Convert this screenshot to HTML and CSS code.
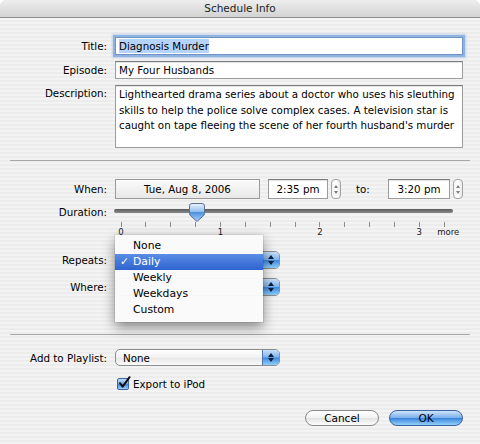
FILE: index.html
```html
<!DOCTYPE html>
<html lang="en">
<head>
<meta charset="UTF-8" />
<title>Schedule Info</title>
<link rel="stylesheet" href="styles.css">
</head>
<body>

<div class="window">
  <div class="titlebar">Schedule Info</div>

  <div class="content">
    <div class="row r-title">
      <label class="label">Title:</label>
      <div class="field focused"><span class="selected">Diagnosis Murder</span></div>
    </div>
    <div class="row r-episode">
      <label class="label">Episode:</label>
      <div class="field">My Four Husbands</div>
    </div>
    <div class="row r-desc">
      <label class="label">Description:</label>
      <div class="field area">Lighthearted drama series about a doctor who uses his sleuthing<br>skills to help the police solve complex cases. A television star is<br>caught on tape fleeing the scene of her fourth husband's murder</div>
    </div>

    <hr class="sep">

    <div class="schedule">
      <div class="row r-when">
        <label class="label">When:</label>
        <div class="datebox">Tue, Aug 8, 2006</div>
        <div class="field time">2:35 pm</div>
        <div class="stepper"><span class="up"></span><span class="down"></span></div>
        <span class="to">to:</span>
        <div class="field time wide">3:20 pm</div>
        <div class="stepper"><span class="up"></span><span class="down"></span></div>
      </div>

      <div class="row r-duration">
        <label class="label">Duration:</label>
        <div class="slider">
          <div class="track"></div>
          <svg class="knob" width="16" height="19" viewBox="0 0 16 19">
            <defs>
              <linearGradient id="knobfill" x1="0" y1="0" x2="0" y2="1">
                <stop offset="0" stop-color="#eef5fd"/>
                <stop offset="0.45" stop-color="#93bfee"/>
                <stop offset="0.5" stop-color="#4f90de"/>
                <stop offset="1" stop-color="#a9d4fb"/>
              </linearGradient>
            </defs>
            <path d="M3 .5 H13 Q15.5 .5 15.5 3 V10.5 Q15.5 12 14 13.2 L8 18.5 L2 13.2 Q.5 12 .5 10.5 V3 Q.5 .5 3 .5 Z" fill="url(#knobfill)" stroke="#5a7296"/>
          </svg>
          <div class="scale">
            <div class="tick"><i></i><span>0</span></div>
            <div class="tick"><i></i></div>
            <div class="tick"><i></i></div>
            <div class="tick"><i></i></div>
            <div class="tick"><i></i><span>1</span></div>
            <div class="tick"><i></i></div>
            <div class="tick"><i></i></div>
            <div class="tick"><i></i></div>
            <div class="tick"><i></i><span>2</span></div>
            <div class="tick"><i></i></div>
            <div class="tick"><i></i></div>
            <div class="tick"><i></i></div>
            <div class="tick"><i></i><span>3</span></div>
            <div class="tick last"><i></i><span>more</span></div>
          </div>
        </div>
      </div>

      <div class="row r-repeats">
        <label class="label">Repeats:</label>
        <div class="popup"><span class="value"></span><span class="arrows"></span></div>
      </div>
      <div class="row r-where">
        <label class="label">Where:</label>
        <div class="popup"><span class="value"></span><span class="arrows"></span></div>
      </div>

      <!-- open Repeats menu -->
      <ul class="menu">
        <li>None</li>
        <li class="current"><span class="check">&#10003;</span>Daily</li>
        <li>Weekly</li>
        <li>Weekdays</li>
        <li>Custom</li>
      </ul>
    </div>

    <hr class="sep sep2">

    <div class="row r-playlist">
      <label class="label">Add to Playlist:</label>
      <div class="popup"><span class="value">None</span><span class="arrows"></span></div>
    </div>
    <div class="row r-ipod">
      <span class="label"></span>
      <span class="checkbox">
        <svg width="14" height="14" viewBox="0 0 14 14">
          <path d="M3 7.2 L5.6 10.6 L12.6 1.2" fill="none" stroke="#111" stroke-width="2" stroke-linecap="round" stroke-linejoin="round"/>
        </svg>
      </span>
      <span class="check-label">Export to iPod</span>
    </div>

    <div class="buttons">
      <button class="btn">Cancel</button>
      <button class="btn default">OK</button>
    </div>
  </div>
</div>

</body>
</html>
```

FILE: styles.css
```css
* {
  box-sizing: border-box;
}
body {
  margin: 0;
  background: #fff;
  font-family: "DejaVu Sans", sans-serif;
  font-size: 10.3px;
  color: #000;
}
.window {
  width: 480px;
  height: 444px;
  border-radius: 6px 6px 0 0;
  overflow: hidden;
  background: repeating-linear-gradient(to bottom, #ececec 0, #ececec 2px, #f3f3f3 2px, #f3f3f3 4px);
}
.titlebar {
  height: 18px;
  line-height: 17px;
  text-align: center;
  font-size: 10.5px;
  color: #222;
  background: linear-gradient(#eeeeee, #d3d3d3);
  border-bottom: 1px solid #8e8e8e;
}
.content {
  position: relative;
}

/* form rows */
.row {
  display: flex;
  align-items: center;
}
.label {
  flex: none;
  width: 107px;
  margin-right: 8px;
  text-align: right;
}
.r-title {
  margin-top: 19px;
  height: 18px;
}
.r-episode {
  margin-top: 6px;
  height: 18px;
}
.r-desc {
  margin-top: 6px;
  height: 63px;
  align-items: flex-start;
}
.r-desc .label {
  padding-top: 2px;
}

.field {
  height: 100%;
  width: 348px;
  padding: 0 3px;
  line-height: 16px;
  background: #fff;
  border: 1px solid #9c9c9c;
  border-top-color: #7c7c7c;
  box-shadow: inset 0 1px 1px rgba(0, 0, 0, 0.12);
  white-space: nowrap;
}
.field.focused {
  border-color: #6f93c4;
  box-shadow: 0 0 0 2px #8fb4e4, 0 0 2px 3px rgba(120, 160, 220, 0.4);
}
.selected {
  background: #b6d4fb;
  padding: 1px 0;
}
.field.area {
  padding-top: 1px;
  line-height: 15.5px;
}

.sep {
  margin: 12px 10px 0;
  border: 0;
  height: 1px;
  background: #a7a7a7;
}
.sep2 {
  margin-top: 38px;
}

/* schedule block */
.schedule {
  position: relative;
}
.r-when {
  margin-top: 18px;
  height: 20px;
}
.datebox {
  width: 145px;
  height: 20px;
  line-height: 18px;
  text-align: center;
  border: 1px solid #9a9a9a;
  background: linear-gradient(#fbfbfb, #e8e8e8);
}
.field.time {
  width: 60px;
  margin-left: 8px;
  text-align: center;
  line-height: 18px;
  padding: 0;
}
.field.time.wide {
  width: 62px;
  margin-left: 0;
}
.stepper {
  width: 10px;
  height: 20px;
  margin-left: 3px;
  border: 1px solid #a4a4a4;
  border-radius: 4px;
  background: linear-gradient(to right, #f4f4f4, #fff, #e8e8e8);
  display: flex;
  flex-direction: column;
  align-items: center;
  justify-content: center;
  gap: 3px;
}
.stepper .up,
.stepper .down {
  width: 0;
  height: 0;
  border-left: 2px solid transparent;
  border-right: 2px solid transparent;
}
.stepper .up {
  border-bottom: 3px solid #7a7a7a;
}
.stepper .down {
  border-top: 3px solid #7a7a7a;
}
.to {
  width: 47px;
  padding-left: 15px;
}

.r-duration {
  margin-top: 4px;
  height: 37px;
  align-items: flex-start;
}
.r-duration .label {
  line-height: 18px;
}
.slider {
  position: relative;
  width: 338px;
}
.track {
  margin: 6px 0 0 -1px;
  height: 4px;
  border-radius: 2px;
  background: linear-gradient(#5b5b5b, #8a8a8a);
}
.knob {
  position: absolute;
  left: 74px;
  top: 0;
}
.scale {
  display: grid;
  grid-template-columns: repeat(14, minmax(0, 1fr));
  width: 348px;
  margin: 9px 0 0 -6.4px;
}
.tick {
  display: flex;
  flex-direction: column;
  align-items: center;
}
.tick i {
  width: 1px;
  height: 5px;
  background: #8c8c8c;
}
.tick span {
  font-size: 8.5px;
  line-height: 10px;
  color: #222;
}
.tick.last span {
  position: relative;
  left: 4px;
}

.r-repeats {
  margin-top: 11px;
  height: 18px;
}
.r-where {
  margin-top: 9px;
  height: 18px;
}

/* aqua popup button */
.popup {
  position: relative;
  width: 165px;
  height: 100%;
  display: flex;
  align-items: center;
  border: 1px solid #8d8d8d;
  border-radius: 5px;
  background: linear-gradient(#ffffff, #f1f1f1 50%, #e6e6e6 51%, #fbfbfb);
  overflow: hidden;
}
.popup .value {
  flex: 1;
  padding-left: 7px;
}
.popup .arrows {
  width: 17px;
  height: 100%;
  border-left: 1px solid #4d76b0;
  background: linear-gradient(#c6e0fb, #7fb3ec 48%, #3f88dd 52%, #8fd0fb);
  position: relative;
}
.popup .arrows::before,
.popup .arrows::after {
  content: "";
  position: absolute;
  left: 5px;
  border-left: 3px solid transparent;
  border-right: 3px solid transparent;
}
.popup .arrows::before {
  top: 3px;
  border-bottom: 4px solid #0f1f3a;
}
.popup .arrows::after {
  bottom: 3px;
  border-top: 4px solid #0f1f3a;
}

/* menu opened from the Repeats popup */
.menu {
  position: absolute;
  left: 115px;
  top: 56px;
  width: 148px;
  margin: 0;
  padding: 3px 0 4px;
  list-style: none;
  background: rgba(250, 250, 250, 0.97);
  box-shadow: 0 5px 12px rgba(0, 0, 0, 0.45), 0 0 0 1px rgba(0, 0, 0, 0.08);
  font-size: 10.8px;
}
.menu li {
  height: 16px;
  line-height: 16px;
  padding-left: 18px;
  position: relative;
}
.menu li.current {
  color: #fff;
  background: linear-gradient(#5a8de6, #2f63cf);
}
.check {
  position: absolute;
  left: 5px;
}

.r-playlist {
  margin-top: 14px;
  height: 17px;
}
.r-ipod {
  margin-top: 11px;
  height: 14px;
}
.checkbox {
  position: relative;
  width: 12px;
  height: 12px;
  margin-left: 2px;
  border: 1px solid #3e65a0;
  border-radius: 2px;
  background: linear-gradient(#c4ddf8, #72a8e6 50%, #3d85db 52%, #9ad0fa);
}
.checkbox svg {
  position: absolute;
  left: -1px;
  top: -3px;
}
.check-label {
  margin-left: 4px;
}

/* dialog buttons */
.buttons {
  display: flex;
  justify-content: flex-end;
  gap: 10px;
  margin: 19px 17px 0 0;
}
.btn {
  width: 74px;
  height: 16px;
  padding: 0;
  font-family: inherit;
  font-size: 10.5px;
  line-height: 14px;
  color: #000;
  border: 1px solid #8a8a8a;
  border-radius: 8px;
  background: linear-gradient(#ffffff, #f2f2f2 50%, #e2e2e2 52%, #fdfdfd);
}
.btn.default {
  border-color: #3b62a0;
  background: linear-gradient(#cfe4fb, #7bb0ec 48%, #3b83dc 52%, #94d2fc);
}
```
